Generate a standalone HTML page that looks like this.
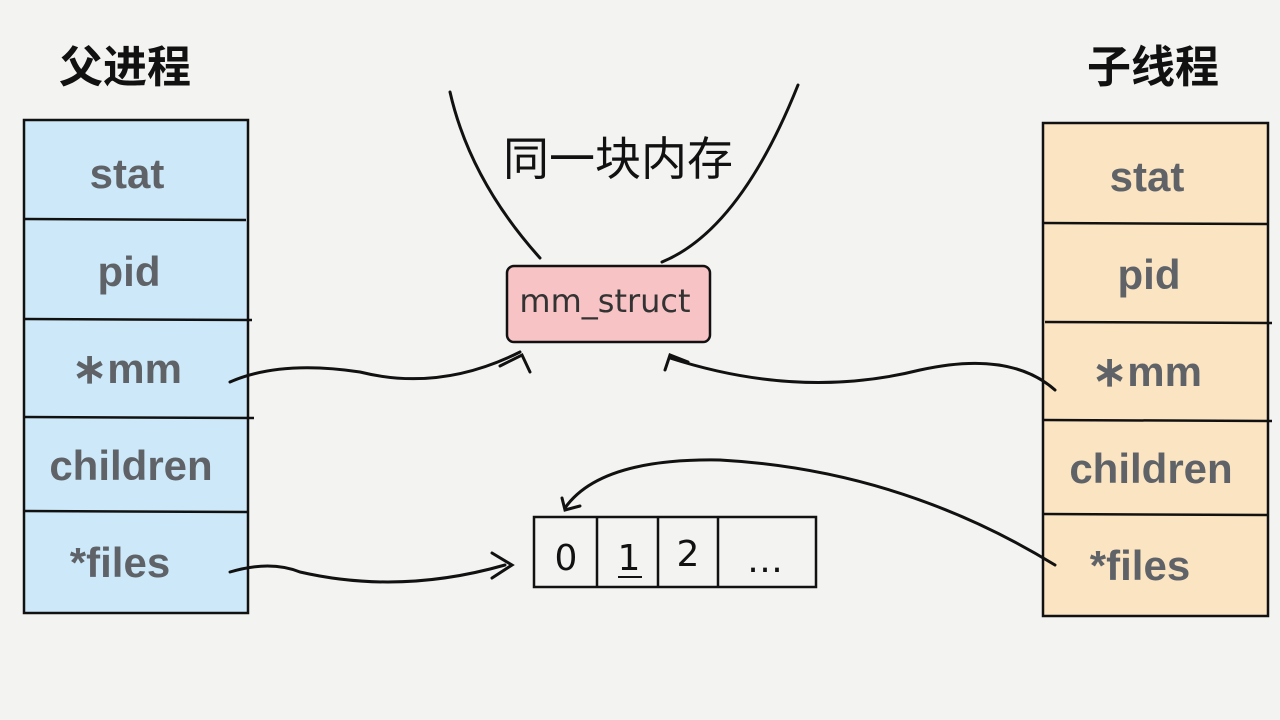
<html><body style="margin:0;background:#f3f3f1;width:1280px;height:720px;overflow:hidden">
<svg width="1280" height="720" xmlns="http://www.w3.org/2000/svg" style="display:block">
<rect width="1280" height="720" fill="#f3f3f1"/>
<g font-family="'Liberation Sans','Noto Sans CJK SC',sans-serif" font-weight="bold" font-size="44" fill="#111">
<text x="59" y="82">父进程</text>
<text x="1087" y="82">子线程</text>
</g>
<rect x="24" y="120" width="224" height="493" fill="#cde9f9" stroke="#111" stroke-width="2.5"/>
<g stroke="#111" stroke-width="2.5" fill="none">
<path d="M24 219 L246 220 M24 319 L252 320 M24 417 L254 418 M24 511 L248 512"/>
</g>
<rect x="1043" y="123" width="225" height="493" fill="#fbe4c2" stroke="#111" stroke-width="2.5"/>
<g stroke="#111" stroke-width="2.5" fill="none">
<path d="M1043 223 L1268 224 M1045 322 L1272 323 M1043 420 L1272 421 M1043 514 L1268 515"/>
</g>
<g font-family="'Liberation Sans',sans-serif" font-weight="bold" font-size="42" fill="#5f6368" text-anchor="middle">
<text x="127" y="188">stat</text>
<text x="129" y="286">pid</text>
<text x="127" y="383">∗mm</text>
<text x="131" y="480">children</text>
<text x="120" y="577">*files</text>
<text x="1147" y="191">stat</text>
<text x="1149" y="289">pid</text>
<text x="1147" y="386">∗mm</text>
<text x="1151" y="483">children</text>
<text x="1140" y="580">*files</text>
</g>
<rect x="507" y="266" width="203" height="76" rx="7" fill="#f8c3c5" stroke="#111" stroke-width="2.5"/>
<text x="605" y="312" font-family="'DejaVu Sans',sans-serif" font-size="32" fill="#333" text-anchor="middle">mm_struct</text>
<text x="503" y="175" font-family="'Noto Sans CJK SC',sans-serif" font-size="46" fill="#111">同一块内存</text>
<g stroke="#111" stroke-width="3" fill="none" stroke-linecap="round">
<path d="M450 92 Q470 180 540 258"/>
<path d="M798 85 Q740 230 662 262"/>
<path d="M230 382 Q280 360 360 372 Q440 392 520 352"/>
<path d="M500 366 L522 355 L530 372"/>
<path d="M1055 390 Q1010 350 920 370 Q800 400 670 358"/>
<path d="M665 370 L670 355 L688 362"/>
<path d="M230 572 Q270 560 300 572 Q400 595 505 565"/>
<path d="M492 553 L512 565 L492 578"/>
<path d="M1055 565 Q900 470 720 460 Q600 458 565 508"/>
<path d="M562 498 L565 510 L580 506"/>
</g>
<g stroke="#111" stroke-width="2.5" fill="none">
<rect x="534" y="517" width="282" height="70"/>
<path d="M597 517 V587 M658 517 V587 M718 517 V587"/>
</g>
<g font-family="'DejaVu Sans',sans-serif" font-size="36" fill="#111" text-anchor="middle">
<text x="566" y="570">0</text>
<text x="629" y="570">1</text>
<text x="688" y="566">2</text>
<text x="765" y="572">…</text>
</g>
<path d="M618 577 H642" stroke="#111" stroke-width="2"/>
</svg>
</body></html>
